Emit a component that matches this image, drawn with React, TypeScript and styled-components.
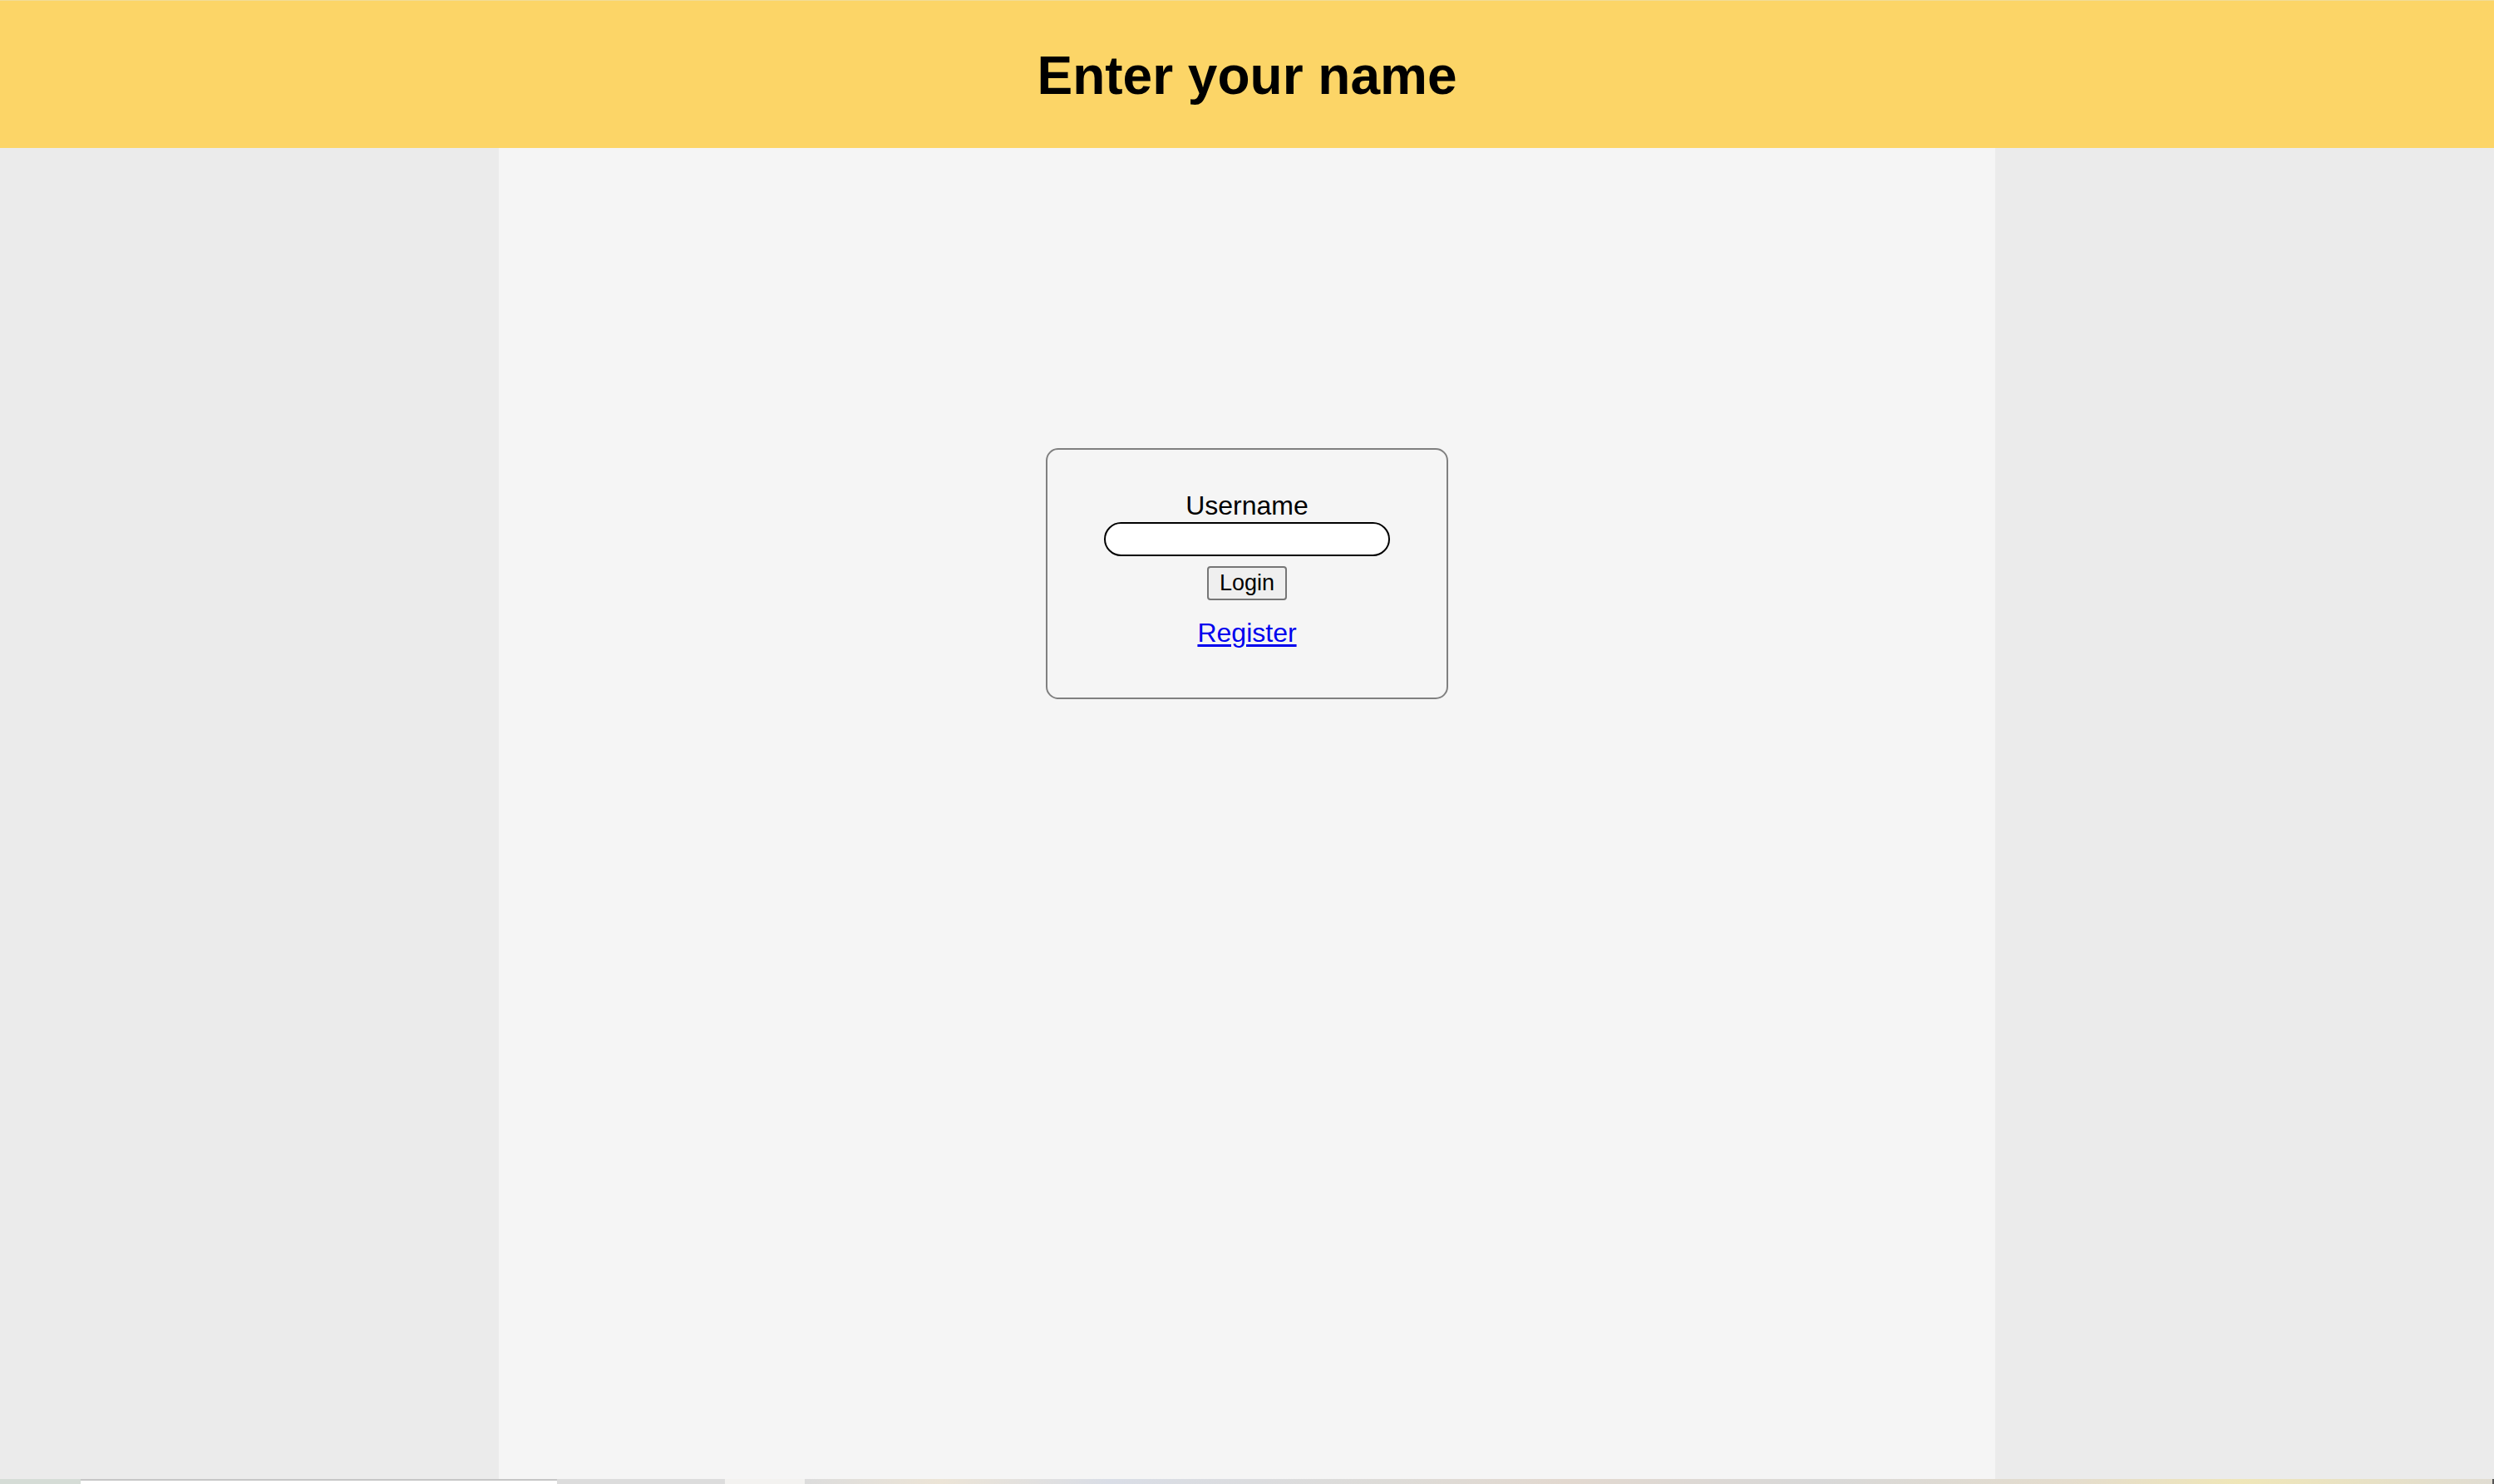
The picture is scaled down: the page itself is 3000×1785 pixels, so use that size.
import React from 'react'
import { styled, createGlobalStyle } from 'styled-components';

const GlobalStyle = createGlobalStyle`
  html, body {
    margin: 0;
    padding: 0;
  }
  body {
    font-family: "Liberation Sans", Arial, sans-serif;
    background-color: #ebebeb;
  }
`;

const App = () => {
  return (
    <>
      <GlobalStyle />
      <PageContainer>
        <Header>
          <HeaderTitle>Enter your name</HeaderTitle>
        </Header>
        <MainColumn>
          <LoginCard onSubmit={(e) => e.preventDefault()}>
            <FieldLabel htmlFor="username">Username</FieldLabel>
            <UsernameInput id="username" type="text" />
            <LoginButton type="submit">Login</LoginButton>
            <RegisterLink href="#register">Register</RegisterLink>
          </LoginCard>
        </MainColumn>
        <TaskStrip>
          <StripPiece $width={97} $color="#d5dcd6" />
          <StripPiece $width={573} $color="#ffffff" $border />
          <StripPiece $width={202} $color="#dcdcdc" />
          <StripPiece $width={96} $color="#f3f2f0" />
          <StripRest />
        </TaskStrip>
      </PageContainer>
    </>
  );
};

const PageContainer = styled.div`
  width: 100%;
  min-height: 100vh;
  display: grid;
  grid-template-rows: 178px 1fr 6px;
  background-color: #ebebeb;
`;

const Header = styled.header`
  display: flex;
  align-items: center;
  justify-content: center;
  background-color: #fcd567;
  border-top: 1px solid #f1dc98;
  box-sizing: border-box;
`;

const HeaderTitle = styled.h1`
  margin: 0;
  font-size: 64px;
  font-weight: 700;
  color: #000;
  line-height: 1;
  padding-top: 2px;
`;

const MainColumn = styled.main`
  width: 1800px;
  margin: 0 auto;
  background-color: #f5f5f5;
  display: flex;
  flex-direction: column;
  align-items: center;
  padding-top: 361px;
  box-sizing: border-box;
`;

const LoginCard = styled.form`
  width: 484px;
  box-sizing: border-box;
  border: 2px solid #808080;
  border-radius: 15px;
  display: flex;
  flex-direction: column;
  align-items: center;
  padding: 49px 0 59px;
`;

const FieldLabel = styled.label`
  font-size: 32px;
  line-height: 37px;
  color: #000;
`;

const UsernameInput = styled.input`
  width: 344px;
  height: 41px;
  margin-top: 1px;
  box-sizing: border-box;
  border: 2px solid #000;
  border-radius: 21px;
  background: #fff;
  outline: none;
  padding: 0 16px;
  font-size: 26px;
  font-family: "Liberation Sans", Arial, sans-serif;
`;

const LoginButton = styled.button`
  width: 96px;
  height: 41px;
  margin-top: 12px;
  box-sizing: border-box;
  border: 2px solid #767676;
  border-radius: 4px;
  background-color: #efefef;
  color: #000;
  font-size: 27px;
  font-family: "Liberation Sans", Arial, sans-serif;
  padding: 0;
`;

const RegisterLink = styled.a`
  margin-top: 21px;
  font-size: 32px;
  line-height: 37px;
  color: #0000ee;
  text-decoration: underline;
  text-underline-offset: 3px;
`;

const TaskStrip = styled.div`
  display: flex;
  height: 6px;
  background-color: #dcdcdc;
`;

const StripPiece = styled.div<{ $width: number; $color: string; $border?: boolean }>`
  width: ${(p) => p.$width}px;
  background-color: ${(p) => p.$color};
  border-top: ${(p) => (p.$border ? '2px solid #c6c6c6' : 'none')};
  box-sizing: border-box;
`;

const StripRest = styled.div`
  flex: 1;
  background: linear-gradient(
    90deg,
    #dcdcdc 0%,
    #ece4d6 8%,
    #d9dde6 18%,
    #dddbd7 35%,
    #e2d8cf 45%,
    #d8d8d8 60%,
    #e4dccd 75%,
    #efe6b8 85%,
    #e0dcd2 100%
  );
  border-right: 2px solid #555;
`;

export default App;
